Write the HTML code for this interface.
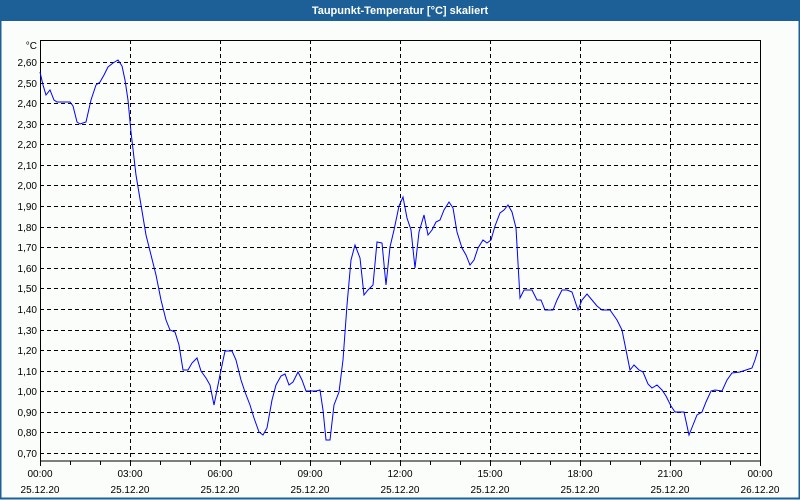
<!DOCTYPE html>
<html><head><meta charset="utf-8"><style>
html,body{margin:0;padding:0;background:#fbfdfb;}
body{width:800px;height:500px;overflow:hidden;position:relative;font-family:"Liberation Sans",sans-serif;}
</style></head><body>
<svg width="800" height="500" xmlns="http://www.w3.org/2000/svg" style="position:absolute;left:0;top:0">
<rect x="0" y="0" width="800" height="500" fill="#fbfdfb"/>
<rect x="0" y="0" width="800" height="21" fill="#1c6097"/>
<rect x="0.5" y="0.5" width="799" height="498" fill="none" stroke="#1c6097" stroke-width="2"/>
<text x="400" y="14" fill="#fff" font-size="11" font-weight="bold" text-anchor="middle">Taupunkt-Temperatur [°C] skaliert</text>
<g stroke="#000" stroke-width="1" stroke-dasharray="4,3" shape-rendering="crispEdges">
<line x1="40" x2="760" y1="62.5" y2="62.5"/><line x1="40" x2="760" y1="83.5" y2="83.5"/><line x1="40" x2="760" y1="103.5" y2="103.5"/><line x1="40" x2="760" y1="124.5" y2="124.5"/><line x1="40" x2="760" y1="144.5" y2="144.5"/><line x1="40" x2="760" y1="165.5" y2="165.5"/><line x1="40" x2="760" y1="185.5" y2="185.5"/><line x1="40" x2="760" y1="206.5" y2="206.5"/><line x1="40" x2="760" y1="227.5" y2="227.5"/><line x1="40" x2="760" y1="247.5" y2="247.5"/><line x1="40" x2="760" y1="268.5" y2="268.5"/><line x1="40" x2="760" y1="288.5" y2="288.5"/><line x1="40" x2="760" y1="309.5" y2="309.5"/><line x1="40" x2="760" y1="330.5" y2="330.5"/><line x1="40" x2="760" y1="350.5" y2="350.5"/><line x1="40" x2="760" y1="371.5" y2="371.5"/><line x1="40" x2="760" y1="391.5" y2="391.5"/><line x1="40" x2="760" y1="412.5" y2="412.5"/><line x1="40" x2="760" y1="432.5" y2="432.5"/><line x1="40" x2="760" y1="453.5" y2="453.5"/>
<line x1="130.5" x2="130.5" y1="40" y2="461"/><line x1="220.5" x2="220.5" y1="40" y2="461"/><line x1="310.5" x2="310.5" y1="40" y2="461"/><line x1="400.5" x2="400.5" y1="40" y2="461"/><line x1="490.5" x2="490.5" y1="40" y2="461"/><line x1="580.5" x2="580.5" y1="40" y2="461"/><line x1="670.5" x2="670.5" y1="40" y2="461"/>
</g>
<g stroke="#000" stroke-width="1" shape-rendering="crispEdges">
<rect x="40.5" y="40.5" width="720" height="420.5" fill="none"/>
<path d="M40.5 461v5M70.5 461v4M100.5 461v4M130.5 461v5M160.5 461v4M190.5 461v4M220.5 461v5M250.5 461v4M280.5 461v4M310.5 461v5M340.5 461v4M370.5 461v4M400.5 461v5M430.5 461v4M460.5 461v4M490.5 461v5M520.5 461v4M550.5 461v4M580.5 461v5M610.5 461v4M640.5 461v4M670.5 461v5M700.5 461v4M730.5 461v4M760.5 461v5"/>
</g>
<polyline fill="none" stroke="#0000ff" stroke-width="1" points="40,72 43,85 46,95 50,90 54,100 57,102 70,102 73,106 77,122 80,124 86,122 91,100 96,85 100,82 104,75 108,67 113,63 118,60 122,66 125,80 128,100 131,132 136,175 141,205 146,235 151,255 156,275 161,300 166,320 170,330 175,332 179,345 183,370 188,370 192,363 197,358 201,371 206,378 210,385 214,405 218,385 221,370 225,351 232,351 236,360 241,380 245,392 250,405 254,418 259,432 263,435 267,428 272,400 276,385 281,376 285,374 289,385 293,382 298,372 302,380 306,391 311,391 316,391 320,390 323,410 326,440 330,440 334,405 339,392 343,360 347,305 351,260 355,245 360,258 364,295 368,290 373,285 377,242 382,243 386,285 390,247 394,230 399,206 403,197 407,218 411,230 415,268 419,232 424,215 428,235 432,230 436,222 440,220 444,210 449,202 453,208 457,232 462,248 466,255 470,265 474,260 478,248 483,240 487,243 491,240 495,226 500,213 504,210 508,205 512,212 516,228 520,298 524,290 532,290 537,300 541,300 545,310 553,310 557,300 562,290 567,290 572,292 578,310 582,300 587,294 592,300 597,306 602,310 610,310 617,320 622,330 626,350 630,370 634,365 639,370 643,372 648,384 652,388 657,385 662,390 666,396 671,406 675,412 684,412 689,435 693,425 697,415 702,412 706,402 711,391 715,390 722,391 727,380 732,373 740,372 746,370 752,368 755,360 758,350"/>
<g font-size="10" fill="#000" text-anchor="end">
<text x="37" y="49">°C</text>
<text x="37" y="66">2,60</text><text x="37" y="87">2,50</text><text x="37" y="107">2,40</text><text x="37" y="128">2,30</text><text x="37" y="148">2,20</text><text x="37" y="169">2,10</text><text x="37" y="189">2,00</text><text x="37" y="210">1,90</text><text x="37" y="231">1,80</text><text x="37" y="251">1,70</text><text x="37" y="272">1,60</text><text x="37" y="292">1,50</text><text x="37" y="313">1,40</text><text x="37" y="334">1,30</text><text x="37" y="354">1,20</text><text x="37" y="375">1,10</text><text x="37" y="395">1,00</text><text x="37" y="416">0,90</text><text x="37" y="436">0,80</text><text x="37" y="457">0,70</text>
</g>
<g font-size="10" fill="#000" text-anchor="middle">
<text x="40" y="477">00:00</text><text x="130" y="477">03:00</text><text x="220" y="477">06:00</text><text x="310" y="477">09:00</text><text x="400" y="477">12:00</text><text x="490" y="477">15:00</text><text x="580" y="477">18:00</text><text x="670" y="477">21:00</text><text x="760" y="477">00:00</text>
<text x="40" y="493">25.12.20</text><text x="130" y="493">25.12.20</text><text x="220" y="493">25.12.20</text><text x="310" y="493">25.12.20</text><text x="400" y="493">25.12.20</text><text x="490" y="493">25.12.20</text><text x="580" y="493">25.12.20</text><text x="670" y="493">25.12.20</text><text x="760" y="493">26.12.20</text>
</g>
</svg>
</body></html>
